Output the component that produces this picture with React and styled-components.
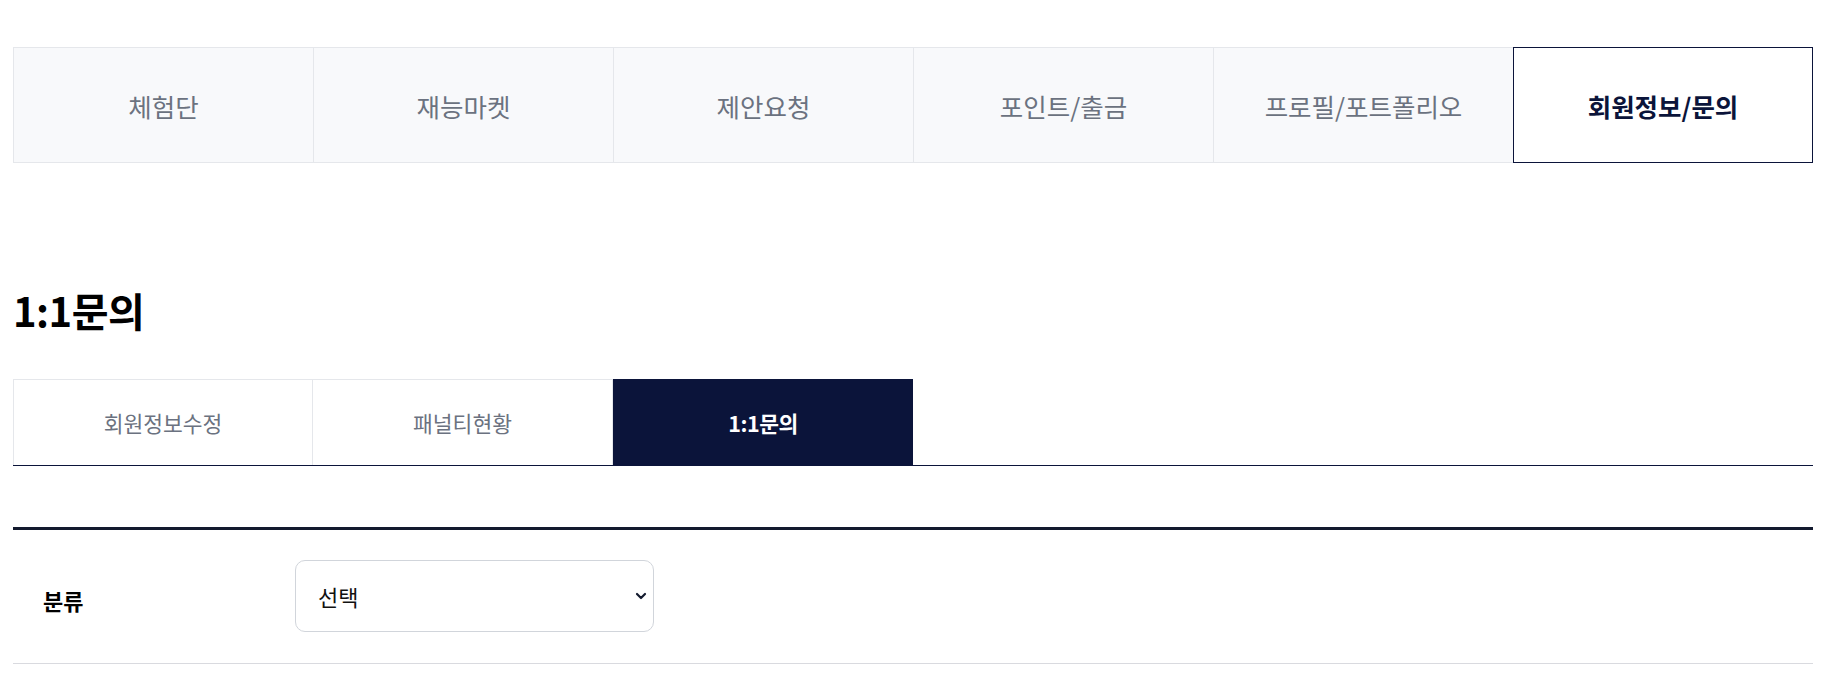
import React, { useState } from "react";
import styled, { createGlobalStyle } from "styled-components";

const GlobalStyle = createGlobalStyle`
  html, body {
    margin: 0;
    padding: 0;
    background: #ffffff;
    font-family: "Noto Sans CJK KR", "Noto Sans", sans-serif;
  }
  * {
    box-sizing: border-box;
  }
`;

const NAVY = "#0b143a";

const Page = styled.div`
  width: 1800px;
  margin-left: 13px;
  padding-top: 47px;
`;

const TopTabs = styled.nav`
  display: grid;
  grid-template-columns: repeat(6, 300px);
`;

const TopTab = styled.button`
  height: 116px;
  border: 1px solid ${(p) => (p.$active ? NAVY : "#e5e7eb")};
  border-right: ${(p) => (p.$active || p.$last ? `1px solid ${p.$active ? NAVY : "#e5e7eb"}` : "none")};
  background: ${(p) => (p.$active ? "#ffffff" : "#f8f9fb")};
  color: ${(p) => (p.$active ? NAVY : "#6b7280")};
  font-family: inherit;
  font-size: 25.5px;
  font-weight: ${(p) => (p.$active ? 700 : 400)};
  cursor: pointer;
  padding: 0;
`;

const Title = styled.h2`
  margin: 123px 0 0 0;
  font-size: 40px;
  line-height: 48px;
  font-weight: 700;
  color: #000000;
  letter-spacing: -0.5px;
`;

const SubTabs = styled.div`
  display: flex;
  margin-top: 45px;
  border-bottom: 1px solid ${NAVY};
`;

const SubTab = styled.button`
  width: 300px;
  height: 86px;
  border: 1px solid ${(p) => (p.$active ? NAVY : "#e5e7eb")};
  border-bottom: none;
  border-left: ${(p) => (p.$first || p.$active ? "1px solid" : "none")};
  border-left-color: ${(p) => (p.$active ? NAVY : "#e5e7eb")};
  background: ${(p) => (p.$active ? NAVY : "#ffffff")};
  color: ${(p) => (p.$active ? "#ffffff" : "#6b7280")};
  font-family: inherit;
  font-size: 21.5px;
  font-weight: ${(p) => (p.$active ? 700 : 400)};
  letter-spacing: ${(p) => (p.$active ? "-0.5px" : "0")};
  cursor: pointer;
  padding: 0;
`;

const Form = styled.div`
  margin-top: 61px;
  border-top: 3px solid #131a2e;
`;

const Row = styled.div`
  display: grid;
  grid-template-columns: 282px 1fr;
  align-items: center;
  padding: 30px 0 31px;
  border-bottom: 1px solid #d9dadf;
`;

const Label = styled.div`
  padding: 8px 0 0 30px;
  font-size: 22px;
  font-weight: 700;
  color: #000000;
`;

const SelectWrap = styled.div`
  position: relative;
  width: 359px;
`;

const Select = styled.select`
  appearance: none;
  width: 100%;
  height: 72px;
  padding: 0 40px 0 22px;
  border: 1px solid #d1d5db;
  border-radius: 10px;
  background: #ffffff;
  font-family: inherit;
  font-size: 22px;
  color: #111111;
  outline: none;
`;

const Chevron = styled.svg`
  position: absolute;
  right: 6px;
  top: 50%;
  transform: translateY(-50%);
  pointer-events: none;
`;

const topMenu = ["체험단", "재능마켓", "제안요청", "포인트/출금", "프로필/포트폴리오", "회원정보/문의"];
const subMenu = ["회원정보수정", "패널티현황", "1:1문의"];

export default function App() {
  const [top, setTop] = useState(5);
  const [sub, setSub] = useState(2);
  const [category, setCategory] = useState("");

  return (
    <>
      <GlobalStyle />
      <Page>
        <TopTabs>
          {topMenu.map((m, i) => (
            <TopTab key={m} $active={top === i} $last={i === topMenu.length - 1} onClick={() => setTop(i)}>
              {m}
            </TopTab>
          ))}
        </TopTabs>

        <Title>1:1문의</Title>

        <SubTabs>
          {subMenu.map((m, i) => (
            <SubTab key={m} $active={sub === i} $first={i === 0} onClick={() => setSub(i)}>
              {m}
            </SubTab>
          ))}
        </SubTabs>

        <Form>
          <Row>
            <Label>분류</Label>
            <SelectWrap>
              <Select value={category} onChange={(e) => setCategory(e.target.value)}>
                <option value="">선택</option>
                <option value="account">회원정보</option>
                <option value="point">포인트/출금</option>
                <option value="etc">기타</option>
              </Select>
              <Chevron width="14" height="14" viewBox="0 0 14 14" fill="none">
                <path d="M3 5l4 4 4-4" stroke="#131a2e" strokeWidth="2.2" strokeLinecap="round" strokeLinejoin="round" />
              </Chevron>
            </SelectWrap>
          </Row>
        </Form>
      </Page>
    </>
  );
}
